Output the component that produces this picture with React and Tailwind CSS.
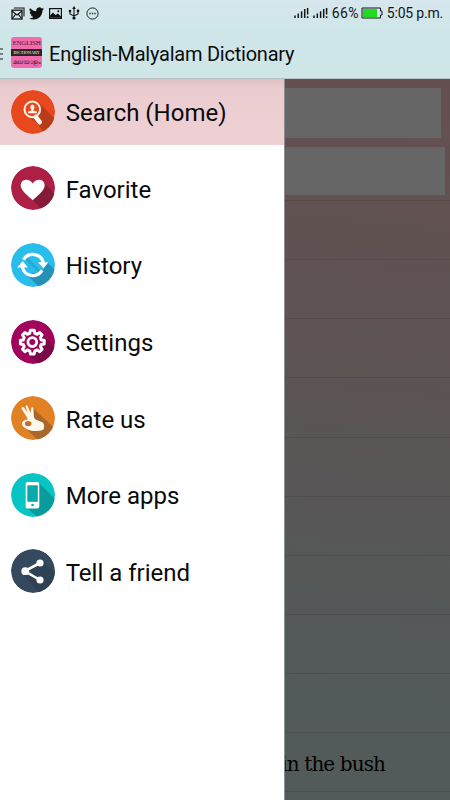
import React from 'react';

const Disc = ({ color, shade, shadow, children }) => {
    return (
        <svg viewBox="0 0 44 44" className="w-11 h-11 shrink-0 overflow-hidden rounded-full">
            <circle cx="22" cy="22" r="22" fill={color} />
            <path d={shadow} fill={shade} />
            {children}
        </svg>
    );
};

const SearchIcon = () => (
    <Disc color="#e8481d" shade="#b83b1a" shadow="M28 13L52 37L40 54L27 34L15 25Z">
        <circle cx="21.3" cy="19.4" r="7.8" fill="#e8481d" stroke="#fff5ec" strokeWidth="2" />
        <path d="M24.8 27L28.7 32.2" stroke="#fff5ec" strokeWidth="4.6" strokeLinecap="round" />
        <ellipse cx="21.4" cy="17.2" rx="2" ry="2.6" fill="#fff5ec" />
        <path d="M20.5 19h1.8v1.6l3.4 1v1.7h-8.6v-1.7l3.4-1z" fill="#fff5ec" />
    </Disc>
);

const HeartIcon = () => (
    <Disc color="#ad1f45" shade="#861a39" shadow="M33 17L54 38L38 52L21 33Z">
        <path d="M21.7 34.2C18 30.5 9.7 24.5 9.7 19.4C9.7 15.8 12.3 13.7 15.2 13.7C18 13.7 20.4 15 21.7 17.5C23 15 25.4 13.7 28.2 13.7C31.1 13.7 33.7 15.8 33.7 19.4C33.7 24.5 25.4 30.5 21.7 34.2Z" fill="#fff" />
    </Disc>
);

const HistoryIcon = () => (
    <Disc color="#29bdeb" shade="#2391b8" shadow="M37 20L54 37L38 54L15 31L31 29Z">
        <path d="M15 15L29 29" stroke="#25a8d4" strokeWidth="3" />
        <path d="M12.5 16.8A10.7 10.7 0 0 1 32.3 20" fill="none" stroke="#fff" strokeWidth="3.3" />
        <path d="M31 27.4A10.7 10.7 0 0 1 11.4 24" fill="none" stroke="#fff" strokeWidth="3.3" />
        <path d="M26.8 19.2H37.4L32.4 25.2Z" fill="#fff" />
        <path d="M6.2 24.6H16.8L11.8 18Z" fill="#fff" />
    </Disc>
);

const GearIcon = () => (
    <Disc color="#a1045c" shade="#7b0849" shadow="M31 14L54 37L38 54L14 31Z">
        <path
            d="M19.4 10.6H23.2L23.9 13.8L26.2 14.7L28.7 13L31.1 15.4L29.4 18L30.3 20.3L33.2 20.7V24.3L30.3 24.8L29.4 27L31.1 29.7L28.7 32.1L26.2 30.4L23.9 31.3L23.2 34.4H19.4L18.7 31.3L16.4 30.4L13.9 32.1L11.5 29.7L13.2 27L12.3 24.8L9.4 24.3V20.7L12.3 20.3L13.2 18L11.5 15.4L13.9 13L16.4 14.7L18.7 13.8Z"
            transform="translate(0 -0.4)"
            fill="#a1045c"
            stroke="#fff"
            strokeWidth="3"
            strokeLinejoin="round"
        />
        <circle cx="21.3" cy="22.1" r="4.4" fill="#a1045c" stroke="#fff" strokeWidth="2.8" />
    </Disc>
);

const HandIcon = () => (
    <Disc color="#e28124" shade="#a9672a" shadow="M23 13L54 42L38 54L14 32L20 26Z">
        <path d="M11.2 11.2C12 10.8 12.8 11.2 13.3 12L16.4 16.6L14.6 10.8C14.5 9.5 16.2 9.1 16.7 10.3L19.6 17.2L20.2 12C20.5 10.8 22.2 10.9 22.3 12.1L22.8 19.5C22.9 22 24 23.5 26.3 24.3L31.8 26.4C33.6 28.6 33.7 31.6 32 34.1C26.5 35.8 19 35.4 14.8 32.4C12.2 31 10.5 29.3 11 27C11.5 25 13.3 24 15.8 23.8C17 23.5 16.6 22.3 15.6 20.7L10.7 13C10.3 12.3 10.4 11.5 11.2 11.2Z" fill="#fff8ee" />
        <ellipse cx="17.2" cy="27.6" rx="3.3" ry="2.7" fill="#bf702a" />
    </Disc>
);

const PhoneIcon = () => (
    <Disc color="#08c5c4" shade="#0a9c9d" shadow="M28 10L54 36L38 54L16 35Z">
        <rect x="14.7" y="9" width="13.6" height="26.4" rx="2" fill="#fff" />
        <rect x="16.3" y="12.3" width="10.5" height="16.5" fill="#08a9aa" />
        <circle cx="21.5" cy="32" r="1.3" fill="#08a9aa" />
    </Disc>
);

const ShareIcon = () => (
    <Disc color="#34495e" shade="#2e4254" shadow="M32 12L54 34L38 54L11 25L29 16Z">
        <path d="M29 14L13.7 22L29 31" fill="none" stroke="#fff" strokeWidth="2.6" />
        <circle cx="29" cy="14" r="3.6" fill="#fff" />
        <circle cx="14.3" cy="22.2" r="3.9" fill="#fff" />
        <circle cx="29" cy="31" r="3.6" fill="#fff" />
    </Disc>
);

const menu = [
    { label: 'Search (Home)', icon: SearchIcon, active: true },
    { label: 'Favorite', icon: HeartIcon },
    { label: 'History', icon: HistoryIcon },
    { label: 'Settings', icon: GearIcon },
    { label: 'Rate us', icon: HandIcon },
    { label: 'More apps', icon: PhoneIcon },
    { label: 'Tell a friend', icon: ShareIcon },
];

const Signal = () => (
    <svg viewBox="0 0 15 12" className="w-[15px] h-3">
        <path d="M1 11V8.5M4.3 11V6.5M7.6 11V4.2M10.7 11V2M13.6 7.6V1M13.6 11V9.3" stroke="#151515" strokeWidth="1.5" />
    </svg>
);

const StatusBar = () => {
    return (
        <div className="flex h-[26px] items-center justify-between pl-[11px] pr-[7px] text-[#151515]">
            <div className="flex items-center">
                <svg viewBox="0 0 14 13" className="w-3.5 h-[13px]" fill="none" stroke="#151515">
                    <path d="M3 1H13V9.5" strokeWidth="1.1" />
                    <rect x="1" y="3.2" width="10" height="8.8" strokeWidth="1.3" />
                    <path d="M1 4L6 8L11 4M1 12L4.5 7.3M11 12L7.5 7.3" strokeWidth="1.1" />
                </svg>
                <svg viewBox="0 0 24 24" className="ml-[4px] w-[15px] h-[15px]" fill="#111">
                    <path d="M23.95 4.57a10 10 0 0 1-2.82.77 4.96 4.96 0 0 0 2.16-2.72c-.95.55-2 .95-3.13 1.18a4.92 4.92 0 0 0-8.38 4.48C7.69 8.1 4.07 6.13 1.64 3.16a4.92 4.92 0 0 0 1.52 6.57 4.9 4.9 0 0 1-2.23-.61v.06a4.92 4.92 0 0 0 3.95 4.83 5 5 0 0 1-2.21.08 4.94 4.94 0 0 0 4.6 3.42A9.87 9.87 0 0 1 0 19.54a13.99 13.99 0 0 0 7.55 2.21c9.05 0 14-7.5 14-13.98 0-.21 0-.42-.02-.63a9.94 9.94 0 0 0 2.46-2.55z" />
                </svg>
                <svg viewBox="0 0 13 11" className="ml-[5px] w-[13px] h-[11px]">
                    <rect x=".6" y=".6" width="11.8" height="9.8" fill="none" stroke="#111" strokeWidth="1.2" />
                    <path d="M1 9.8V7.5L4 4.5L6.5 7L9 5.5L12 8.5V9.8Z" fill="#111" />
                    <circle cx="9.3" cy="3.2" r="1" fill="#111" />
                </svg>
                <svg viewBox="0 0 12 14" className="ml-[6px] w-3 h-3.5" fill="none" stroke="#111" strokeWidth="1.1">
                    <path d="M6 12V2M2 5.5V8L6 10L10 8V5" />
                    <path d="M6 0L7.8 3H4.2Z" fill="#111" stroke="none" />
                    <circle cx="6" cy="12" r="1.6" fill="#111" stroke="none" />
                    <circle cx="2" cy="5" r="1.3" fill="#111" stroke="none" />
                    <path d="M8.8 3.6h2.4V6H8.8z" fill="#111" stroke="none" />
                </svg>
                <svg viewBox="0 0 13 13" className="ml-[6px] w-[13px] h-[13px]">
                    <circle cx="6.5" cy="6.5" r="5.6" fill="none" stroke="#222" strokeWidth="1" />
                    <path d="M3.4 6.5h1.3M5.9 6.5h1.3M8.4 6.5h1.3" stroke="#222" strokeWidth="1.3" />
                </svg>
            </div>
            <div className="flex items-center font-['Roboto',sans-serif] text-[14px]">
                <Signal />
                <span className="w-1" />
                <Signal />
                <span className="ml-[4px] w-[29px] whitespace-nowrap tracking-[0.3px]">66%</span>
                <svg viewBox="0 0 22 12" className="w-[22px] h-3">
                    <path d="M1 1H19.5V4H21V8H19.5V11H1Z" fill="none" stroke="#151515" strokeWidth="1" />
                    <rect x="2" y="2" width="14" height="8" fill="#1edc1e" />
                </svg>
                <span className="ml-[4px] whitespace-nowrap tracking-[-0.2px]">5:05 p.m.</span>
            </div>
        </div>
    );
};

const AppLogo = () => {
    return (
        <div className="flex h-[31px] w-[31px] flex-col rounded-[3px] bg-[#f16cae] text-center text-[#3d1c30]">
            <div className="h-3 whitespace-nowrap font-['Liberation_Serif',serif] text-[7px] leading-[13px] tracking-[-0.3px]">ENGLISH</div>
            <div className="h-[7px] bg-[#2d2428] font-['Liberation_Serif',serif] text-[4px] font-bold leading-[7px] text-[#d8d0b4]">DICTIONARY</div>
            <div className="flex h-3 justify-center whitespace-nowrap text-[6.5px] leading-3">മലയാളം</div>
        </div>
    );
};

const Header = () => {
    return (
        <div className="h-[79px] border-b border-[#b9c4c6] bg-linear-to-b from-[#d6e7ed] to-[#cfe6e8] to-40%">
            <StatusBar />
            <div className="flex h-[52px] items-center">
                <div className="flex w-[3px] flex-col gap-[3px] pt-[3px]">
                    <span className="h-[2px] bg-[#777f80]" />
                    <span className="h-[2px] bg-[#777f80]" />
                    <span className="h-[2px] bg-[#777f80]" />
                </div>
                <div className="ml-2">
                    <AppLogo />
                </div>
                <h1 className="ml-[7px] whitespace-nowrap pt-[3px] font-['Roboto',sans-serif] text-[20px] tracking-[-0.23px] text-[#0c0c0c]">English-Malyalam Dictionary</h1>
            </div>
        </div>
    );
};

const Drawer = () => {
    return (
        <nav className="absolute inset-y-0 left-0 w-[285px] border-r border-[#8a8f90] bg-white">
            <ul className="flex flex-col gap-[11px]">
                {menu.map(({ label, icon: Icon, active }) => (
                    <li
                        key={label}
                        className={`flex h-[65.6px] items-center pl-[10.7px] ${active ? 'bg-linear-to-b from-[#dfc1c5] via-[#ebcdd1] via-15% to-[#efd0d3]' : ''}`}
                    >
                        <Icon />
                        <span className="ml-[11px] whitespace-nowrap pt-[3px] font-['Roboto',sans-serif] text-[24px] leading-7 text-[#0a0a0a]">{label}</span>
                    </li>
                ))}
            </ul>
        </nav>
    );
};

const WordList = () => {
    const rows = ['', '', '', '', '', '', '', '', '', 'in the bush', ''];
    return (
        <div className="h-full overflow-hidden bg-[linear-gradient(186deg,#fcc8c8_0%,#eed0d0_32%,#dcd8d8_55%,#d0e0e0_80%,#d0e0e4_100%)]">
            <div className="pt-[9px]">
                <div className="mr-[9px] h-[50px] bg-white" />
                <div className="mr-[5px] mt-[9px] h-[48px] bg-white" />
            </div>
            <div className="mt-[5px]">
                {rows.map((row, i) => (
                    <div key={i} className="flex h-[59.15px] items-center justify-end border-t border-black/10 pr-[65px]">
                        <span className="whitespace-nowrap pt-[3px] font-['DejaVu_Serif',serif] text-[20px] tracking-[-0.9px] text-black">{row}</span>
                    </div>
                ))}
            </div>
        </div>
    );
};

const App = () => {
    return (
        <div className="flex h-[800px] w-[450px] flex-col overflow-hidden">
            <Header />
            <main className="relative min-h-0 flex-1">
                <WordList />
                <div className="absolute inset-0 bg-black/60" />
                <Drawer />
            </main>
        </div>
    );
};

export default App;
